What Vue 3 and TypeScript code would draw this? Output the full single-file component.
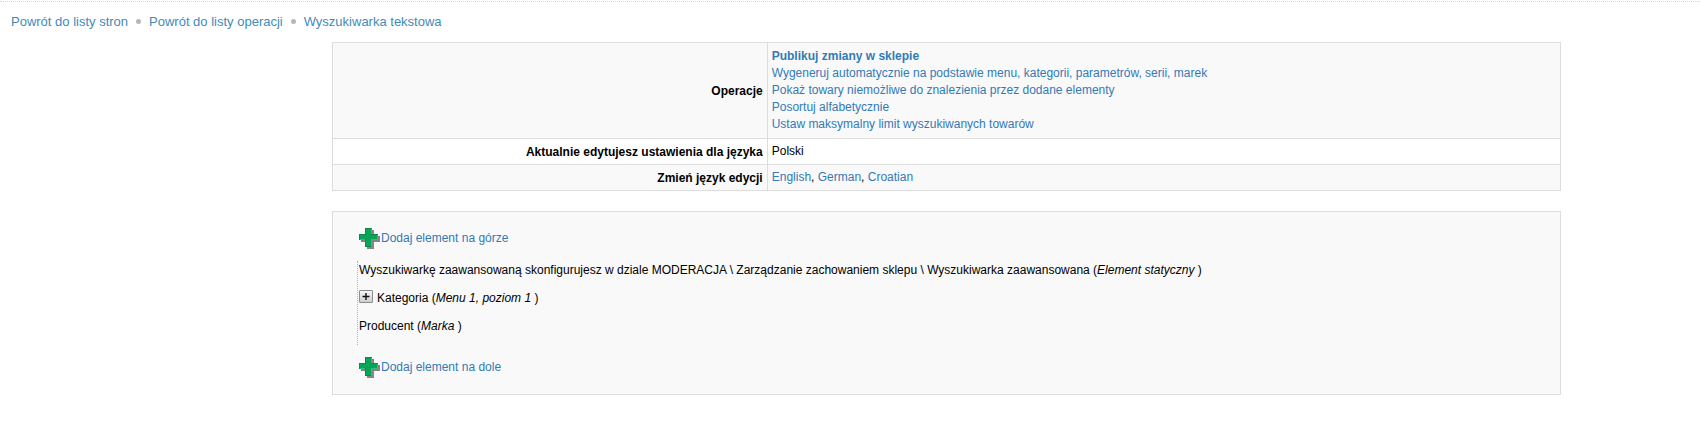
<script setup lang="ts">
import { ref } from 'vue'

interface TreeItem {
  name: string
  kind: string
  expandable: boolean
}

const crumbs: string[] = ['Powrót do listy stron', 'Powrót do listy operacji', 'Wyszukiwarka tekstowa']

const operations: string[] = [
  'Publikuj zmiany w sklepie',
  'Wygeneruj automatycznie na podstawie menu, kategorii, parametrów, serii, marek',
  'Pokaż towary niemożliwe do znalezienia przez dodane elementy',
  'Posortuj alfabetycznie',
  'Ustaw maksymalny limit wyszukiwanych towarów',
]

const languages: string[] = ['English', 'German', 'Croatian']

const items: TreeItem[] = [
  {
    name: 'Wyszukiwarkę zaawansowaną skonfigurujesz w dziale MODERACJA \\ Zarządzanie zachowaniem sklepu \\ Wyszukiwarka zaawansowana',
    kind: 'Element statyczny',
    expandable: false,
  },
  { name: 'Kategoria', kind: 'Menu 1, poziom 1', expandable: true },
  { name: 'Producent', kind: 'Marka', expandable: false },
]

const expanded = ref(false)
</script>

<template>
  <div class="page">
    <nav class="crumbs" aria-label="Nawigacja">
      <template v-for="(crumb, i) in crumbs" :key="crumb">
        <span v-if="i > 0" class="dot"></span>
        <a href="#">{{ crumb }}</a>
      </template>
    </nav>

    <main class="content">
      <table class="settings">
        <colgroup>
          <col class="label-column" />
          <col />
        </colgroup>
        <tbody>
          <tr>
            <th scope="row">Operacje</th>
            <td>
              <ul class="operations">
                <li v-for="operation in operations" :key="operation">
                  <a href="#">{{ operation }}</a>
                </li>
              </ul>
            </td>
          </tr>
          <tr>
            <th scope="row">Aktualnie edytujesz ustawienia dla języka</th>
            <td>Polski</td>
          </tr>
          <tr>
            <th scope="row">Zmień język edycji</th>
            <td>
              <template v-for="(language, i) in languages" :key="language"
                ><template v-if="i > 0">, </template><a href="#">{{ language }}</a></template
              >
            </td>
          </tr>
        </tbody>
      </table>

      <section class="panel">
        <a class="add" href="#">
          <svg class="plus" viewBox="0 0 21 21" aria-hidden="true">
            <path fill="#858585" d="M8 2h7v6h6v6h-6v7H8v-7H2V8h6z" />
            <path fill="#0b8a48" d="M6 0h7v6h6v6h-6v7H6v-7H0V6h6z" />
            <path fill="#06a557" d="M7 1h5v6h6v4h-6v7H7v-7H1V7h6z" />
            <path fill="#35bd78" d="M12 1h1v5h-1zM18 7h1v5h-6v7h-1v-8h6zM1 11h5v1H1z" />
          </svg>
          <span>Dodaj element na górze</span>
        </a>

        <ul class="tree">
          <li v-for="item in items" :key="item.name">
            <button
              v-if="item.expandable"
              class="toggle"
              type="button"
              aria-label="Rozwiń"
              :aria-expanded="expanded"
              @click="expanded = !expanded"
            >
              <svg viewBox="0 0 12 11" aria-hidden="true">
                <path d="M2.5 5.5h7M6 2v7" fill="none" stroke="#111" stroke-width="1.4" />
              </svg>
            </button>
            <span>{{ item.name }} (<em>{{ item.kind }}</em> )</span>
          </li>
        </ul>

        <a class="add" href="#">
          <svg class="plus" viewBox="0 0 21 21" aria-hidden="true">
            <path fill="#858585" d="M8 2h7v6h6v6h-6v7H8v-7H2V8h6z" />
            <path fill="#0b8a48" d="M6 0h7v6h6v6h-6v7H6v-7H0V6h6z" />
            <path fill="#06a557" d="M7 1h5v6h6v4h-6v7H7v-7H1V7h6z" />
            <path fill="#35bd78" d="M12 1h1v5h-1zM18 7h1v5h-6v7h-1v-8h6zM1 11h5v1H1z" />
          </svg>
          <span>Dodaj element na dole</span>
        </a>
      </section>
    </main>
  </div>
</template>

<style>
body {
  margin: 0;
  background: #fff;
}
</style>

<style scoped>
.page {
  padding-top: 1px;
  font-family: "Liberation Sans", Arial, sans-serif;
  font-size: 12px;
  line-height: 17px;
  color: #000;
}

a {
  color: #337ab7;
  text-decoration: none;
}

a:hover {
  text-decoration: underline;
}

ul {
  margin: 0;
  padding: 0;
  list-style: none;
}

.crumbs {
  display: flex;
  align-items: center;
  height: 40px;
  padding-left: 11px;
  border-top: 1px dotted #d8d8d8;
  box-sizing: border-box;
  font-size: 13px;
}

.crumbs a {
  color: #428bba;
}

.dot {
  width: 5px;
  height: 5px;
  margin: 0 8px;
  border-radius: 50%;
  background: #b4b7c0;
}

.content {
  margin: 1px 139px 0 332px;
}

.settings {
  width: 100%;
  border-collapse: collapse;
  table-layout: fixed;
}

.label-column {
  width: 35.4%;
}

.settings th,
.settings td {
  padding: 4px;
  border: 1px solid #ddd;
}

.settings th {
  padding: 5px 4px 3px;
  text-align: right;
  vertical-align: middle;
}

.settings td {
  vertical-align: top;
}

.settings tr:nth-child(odd) {
  background: #f9f9f9;
}

.operations {
  padding: 1px 0;
}

.operations li:first-child {
  font-weight: bold;
}

.panel {
  margin-top: 20px;
  padding: 16px 24px;
  border: 1px solid #ddd;
  background: #f9f9f9;
}

.add {
  display: flex;
  align-items: center;
  width: max-content;
  margin-left: 2px;
  gap: 1px;
}

.plus {
  display: block;
  width: 21px;
  height: 21px;
}

.tree {
  margin: 12px 0;
  border-left: 1px dotted #b5b5b5;
}

.tree li {
  display: flex;
  align-items: flex-start;
  gap: 4px;
  height: 28px;
  padding: 1px 0 0 1px;
  box-sizing: border-box;
}

.toggle {
  width: 14px;
  height: 13px;
  padding: 0;
  border: 1px solid #8c8c8c;
  border-radius: 1px;
  background: linear-gradient(#f6f6f6, #cfcfcf);
}

.toggle svg {
  display: block;
  width: 100%;
  height: 100%;
}
</style>
